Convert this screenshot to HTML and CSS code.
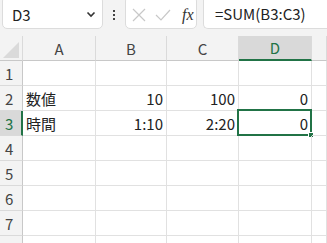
FILE: index.html
```html
<!DOCTYPE html>
<html lang="ja">
<head>
<meta charset="utf-8">
<link rel="stylesheet" href="styles.css">
</head>
<body>
<div class="toolbar">
  <div class="namebox"><span class="ref">D3</span>
    <svg class="chev" width="10" height="7" viewBox="0 0 10 7"><path d="M1.5 1.5 L5 5 L8.5 1.5" fill="none" stroke="#333" stroke-width="1.6"/></svg>
  </div>
  <div class="kebab"><i></i><i></i><i></i></div>
  <div class="fbtns">
    <svg width="16" height="16" viewBox="0 0 16 16"><path d="M2 2 L14 14 M14 2 L2 14" stroke="#c8c8c8" stroke-width="1.2" fill="none"/></svg>
    <svg width="16" height="16" viewBox="0 0 16 16"><path d="M1 8 L6 13 L15 3" stroke="#c8c8c8" stroke-width="1.2" fill="none"/></svg>
    <span class="fx">fx</span>
  </div>
  <div class="formula">=SUM(B3:C3)</div>
</div>
<div class="grid">
  <div class="hd corner"><svg width="16" height="16" viewBox="0 0 16 16"><path d="M16 0 L16 16 L0 16 Z" fill="#dadada"/></svg></div>
  <div class="hd">A</div><div class="hd">B</div><div class="hd">C</div><div class="hd sel">D</div><div class="hd"></div>

  <div class="rh">1</div><div class="c"></div><div class="c"></div><div class="c"></div><div class="c"></div><div class="c"></div>
  <div class="rh">2</div><div class="c">数値</div><div class="c num">10</div><div class="c num">100</div><div class="c num">0</div><div class="c"></div>
  <div class="rh rsel">3</div><div class="c">時間</div><div class="c num">1:10</div><div class="c num">2:20</div><div class="c num active">0<span class="selbox"><span class="handle"></span></span></div><div class="c"></div>
  <div class="rh">4</div><div class="c"></div><div class="c"></div><div class="c"></div><div class="c"></div><div class="c"></div>
  <div class="rh">5</div><div class="c"></div><div class="c"></div><div class="c"></div><div class="c"></div><div class="c"></div>
  <div class="rh">6</div><div class="c"></div><div class="c"></div><div class="c"></div><div class="c"></div><div class="c"></div>
  <div class="rh">7</div><div class="c"></div><div class="c"></div><div class="c"></div><div class="c"></div><div class="c"></div>
  <div class="rh">8</div><div class="c"></div><div class="c"></div><div class="c"></div><div class="c"></div><div class="c"></div>
</div>
</body>
</html>
```
FILE: styles.css
```css
* { box-sizing: border-box; }
html, body { margin: 0; padding: 0; }
body {
  width: 327px; height: 243px; overflow: hidden;
  background: #fff;
  font-family: "Noto Sans CJK JP", "Noto Sans", sans-serif;
  color: #222;
}
.toolbar {
  height: 36px;
  background: #f3f3f3;
  display: flex;
  align-items: flex-start;
  position: relative;
}
.namebox {
  margin-left: 2px;
  margin-top: -4px;
  width: 101px; height: 33px;
  background: #fff;
  border: 1px solid #dcdcdc;
  border-radius: 5px;
  display: flex; align-items: center; justify-content: space-between;
  padding: 4px 6px 0 9px;
}
.ref { font-size: 15px; line-height: 1; }
.kebab {
  width: 22px; height: 29px;
  display: flex; flex-direction: column; align-items: center; justify-content: center; gap: 2px;
  padding-top: 0px;
}
.kebab i { width: 2px; height: 2px; background: #444; display: block; }
.fbtns {
  margin-top: -4px;
  width: 72px; height: 33px;
  background: #fff;
  border: 1px solid #dcdcdc;
  border-radius: 5px;
  display: flex; align-items: center; gap: 8px;
  padding: 4px 0 0 5px;
}
.fx { font-family: "Liberation Serif", serif; font-style: italic; font-size: 16px; color: #333; margin-left: 3px; }
.formula {
  margin-top: -4px;
  margin-left: 6px;
  flex: 1;
  height: 33px;
  background: #fff;
  border: 1px solid #dcdcdc;
  border-right: none;
  border-radius: 5px 0 0 5px;
  font-size: 15px;
  padding: 9px 0 0 11px;
  line-height: 1;
}
.grid {
  display: grid;
  grid-template-columns: 23px 73px 71px 72px 73px 1fr;
  grid-auto-rows: 25px;
}
.hd {
  background: #f3f3f3;
  border-right: 1px solid #dadada;
  border-bottom: 1px solid #c8c8c8;
  font-size: 15px; color: #444;
  display: flex; align-items: center; justify-content: center;
}
.hd.corner { justify-content: flex-end; align-items: flex-end; padding: 0 3px 2px 0; }
.hd.sel { background: #d9d9d9; color: #217346; border-bottom: 2px solid #217346; }
.rh {
  background: #f3f3f3;
  border-right: 1px solid #c8c8c8;
  border-bottom: 1px solid #dadada;
  font-size: 15px; color: #444;
  display: flex; align-items: center; padding-left: 5px;
}
.rh.rsel { background: #d9d9d9; color: #217346; border-right: 2px solid #217346; }
.c {
  border-right: 1px solid #e1e1e1;
  border-bottom: 1px solid #e1e1e1;
  font-size: 15px; color: #222;
  display: flex; align-items: center; padding: 0 3px;
  position: relative;
}
.c.num { justify-content: flex-end; }
.selbox {
  position: absolute;
  left: -2px; top: -2px; right: -1px; bottom: -1px;
  border: 2px solid #217346;
}
.handle {
  position: absolute; right: -4px; bottom: -4px;
  width: 6px; height: 6px; background: #217346; border: 1px solid #fff;
}
```
